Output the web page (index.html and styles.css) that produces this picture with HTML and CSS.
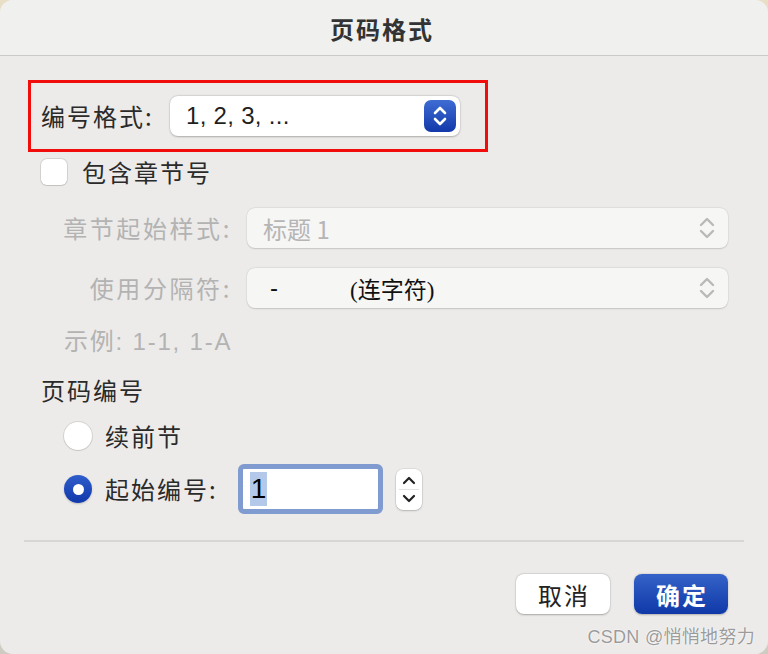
FILE: index.html
```html
<!DOCTYPE html>
<html lang="zh-CN">
<head>
<meta charset="utf-8">
<title>页码格式</title>
<link rel="stylesheet" href="styles.css">
</head>
<body>
<div class="dialog">
  <div class="titlebar">页码格式</div>
  <div class="content">
    <div class="highlight">
      <span class="label">编号格式:</span>
      <div class="select main-select">
        <span class="value latin">1, 2, 3, ...</span>
        <span class="stepper-blue">
          <svg width="32" height="32" viewBox="0 0 32 32"><path d="M11 13 L16 8 L21 13" fill="none" stroke="#fff" stroke-width="2.6" stroke-linecap="round" stroke-linejoin="round"/><path d="M11 19 L16 24 L21 19" fill="none" stroke="#fff" stroke-width="2.6" stroke-linecap="round" stroke-linejoin="round"/></svg>
        </span>
      </div>
    </div>

    <div class="check-row">
      <span class="checkbox"></span>
      <span class="label">包含章节号</span>
    </div>

    <div class="field-row first">
      <span class="label field-label disabled">章节起始样式:</span>
      <div class="select wide disabled-select">
        <span class="value disabled">标题 1</span>
        <svg class="chev" width="20" height="32" viewBox="0 0 20 32"><path d="M4 13 L10 7 L16 13" fill="none" stroke="#b9b9b9" stroke-width="2.4" stroke-linecap="round" stroke-linejoin="round"/><path d="M4 19 L10 25 L16 19" fill="none" stroke="#b9b9b9" stroke-width="2.4" stroke-linecap="round" stroke-linejoin="round"/></svg>
      </div>
    </div>

    <div class="field-row second">
      <span class="label field-label disabled">使用分隔符:</span>
      <div class="select wide disabled-select">
        <span class="value dash">-</span>
        <span class="value serif">(连字符)</span>
        <svg class="chev" width="20" height="32" viewBox="0 0 20 32"><path d="M4 13 L10 7 L16 13" fill="none" stroke="#b9b9b9" stroke-width="2.4" stroke-linecap="round" stroke-linejoin="round"/><path d="M4 19 L10 25 L16 19" fill="none" stroke="#b9b9b9" stroke-width="2.4" stroke-linecap="round" stroke-linejoin="round"/></svg>
      </div>
    </div>

    <div class="example disabled">示例:&nbsp;1-1, 1-A</div>

    <div class="section-title label">页码编号</div>

    <div class="radio-row r1">
      <span class="radio"></span>
      <span class="label">续前节</span>
    </div>

    <div class="radio-row r2">
      <span class="radio checked"><span class="dot"></span></span>
      <span class="label">起始编号:</span>
      <div class="numfield"><span class="sel">1</span></div>
      <div class="mini-stepper">
        <svg width="26" height="41" viewBox="0 0 26 41"><path d="M8 14 L13 9 L18 14" fill="none" stroke="#222" stroke-width="2.2" stroke-linecap="round" stroke-linejoin="round"/><line x1="3" y1="20.5" x2="23" y2="20.5" stroke="#e2e2e2" stroke-width="1"/><path d="M8 27 L13 32 L18 27" fill="none" stroke="#222" stroke-width="2.2" stroke-linecap="round" stroke-linejoin="round"/></svg>
      </div>
    </div>

    <div class="separator"></div>

    <div class="buttons">
      <button class="btn cancel">取消</button>
      <button class="btn ok">确定</button>
    </div>
    <div class="watermark">CSDN @悄悄地努力</div>
  </div>
</div>
</body>
</html>
```

FILE: styles.css
```css
html, body {
  margin: 0;
  padding: 0;
}
body {
  width: 768px;
  height: 654px;
  background: linear-gradient(#e9dfc6, #cfcbc3);
  font-family: "Liberation Sans", "Noto Sans CJK SC", sans-serif;
  color: #2a2a2a;
  overflow: hidden;
}
.dialog {
  width: 768px;
  height: 654px;
  border-radius: 13px;
  background: #ecebe9;
  overflow: hidden;
  display: flex;
  flex-direction: column;
}
.titlebar {
  flex: none;
  height: 56px;
  box-sizing: border-box;
  padding-top: 1px;
  padding-right: 4px;
  background: #f0f0ee;
  border-bottom: 1px solid #cbcac8;
  display: flex;
  align-items: center;
  justify-content: center;
  font-family: "Noto Sans CJK SC", sans-serif;
  font-weight: 700;
  font-size: 24px;
  letter-spacing: 2px;
  color: #333;
}
.content {
  position: relative;
  flex: 1;
  padding: 24px 0 0 0;
}
.label {
  font-family: "Noto Sans CJK SC", sans-serif;
  font-size: 24px;
  letter-spacing: 2px;
  color: #2a2a2a;
  line-height: 30px;
}
.disabled {
  color: #b3b3b3;
}
.highlight {
  margin-left: 28px;
  width: 460px;
  height: 72px;
  box-sizing: border-box;
  border: 3px solid #f20d0d;
  display: flex;
  align-items: center;
  padding-left: 10px;
}
.select {
  height: 40px;
  background: #fff;
  border-radius: 8px;
  box-shadow: 0 0.5px 2px rgba(0,0,0,0.25), 0 0 0 0.5px rgba(0,0,0,0.06);
  box-sizing: border-box;
  display: flex;
  align-items: center;
  position: relative;
}
.main-select {
  margin-left: auto;
  margin-right: 25px;
  width: 290px;
  padding-left: 16px;
}
.value {
  font-size: 24px;
  color: #1f1f1f;
}
.latin {
  font-family: "Liberation Sans", sans-serif;
  letter-spacing: 0.3px;
}
.stepper-blue {
  position: absolute;
  right: 4px;
  top: 4px;
  width: 32px;
  height: 32px;
  border-radius: 7px;
  background: linear-gradient(#3e6cd3, #1238a9);
  display: block;
}
.stepper-blue svg { display: block; }

.check-row {
  margin-top: 6px;
  margin-left: 41px;
  display: flex;
  align-items: center;
  height: 27px;
}
.checkbox {
  width: 26px;
  height: 26px;
  background: #fff;
  border-radius: 6px;
  box-shadow: 0 0 0 1px rgba(0,0,0,0.1), 0 1px 1px rgba(0,0,0,0.08);
  margin-right: 15px;
}

.field-row {
  display: flex;
  align-items: center;
  height: 40px;
}
.field-row.first { margin-top: 23px; }
.field-row.second { margin-top: 20px; }
.field-label {
  width: 247px;
  text-align: right;
  padding-right: 15px;
  box-sizing: border-box;
  letter-spacing: 2.6px;
}
.wide {
  width: 481px;
  padding-left: 16px;
}
.disabled-select {
  background: #f6f6f5;
  box-shadow: 0 0.5px 1.5px rgba(0,0,0,0.15), 0 0 0 0.5px rgba(0,0,0,0.05);
}
.disabled-select .value.disabled {
  color: #b5b5b5;
  font-family: "Noto Sans CJK SC", sans-serif;
}
.chev {
  position: absolute;
  right: 11px;
  top: 4px;
}
.dash {
  font-family: "Liberation Sans", sans-serif;
  color: #111;
  width: 80px;
  padding-left: 7px;
}
.serif {
  font-family: "Liberation Serif", "Noto Sans CJK SC", serif;
  color: #111;
  font-size: 23px;
}
.example {
  margin-top: 19px;
  margin-left: 64px;
  font-family: "Liberation Sans", "Noto Sans CJK SC", sans-serif;
  font-size: 24px;
  letter-spacing: 1.8px;
  line-height: 30px;
  color: #b3b3b3;
}
.section-title {
  margin-top: 18px;
  margin-left: 41px;
}
.radio-row {
  display: flex;
  align-items: center;
  margin-left: 64px;
}
.radio-row.r1 {
  margin-top: 17px;
  height: 28px;
}
.radio-row.r2 {
  margin-top: 14px;
  height: 50px;
}
.radio {
  width: 28px;
  height: 28px;
  border-radius: 50%;
  background: #fff;
  box-shadow: 0 0 0 1px rgba(0,0,0,0.1), 0 1px 1px rgba(0,0,0,0.08);
  margin-right: 13px;
  display: flex;
  align-items: center;
  justify-content: center;
  flex: none;
}
.radio.checked {
  background: linear-gradient(#2f5dcb, #1038ab);
  box-shadow: 0 1px 2px rgba(0,0,0,0.2);
}
.dot {
  width: 11px;
  height: 11px;
  border-radius: 50%;
  background: #fff;
}
.numfield {
  margin-left: 20px;
  width: 145px;
  height: 50px;
  box-sizing: border-box;
  border: 5px solid #7f9bd0;
  border-radius: 6px;
  background: #fff;
  display: flex;
  align-items: center;
  padding-left: 7px;
}
.sel {
  background: #b4c8ea;
  color: #000;
  font-family: "Liberation Sans", sans-serif;
  font-size: 28px;
  line-height: 34px;
  padding: 0 1px;
}
.mini-stepper {
  margin-left: 13px;
  width: 26px;
  height: 41px;
  background: #fff;
  border-radius: 7px;
  box-shadow: 0 0 0 0.5px rgba(0,0,0,0.12), 0 1px 2px rgba(0,0,0,0.18);
}
.mini-stepper svg { display: block; }
.separator {
  margin: 26px 24px 0 24px;
  height: 2px;
  background: #d7d6d4;
}
.buttons {
  display: flex;
  justify-content: flex-end;
  gap: 24px;
  margin-top: 32px;
  padding-right: 40px;
}
.btn {
  width: 94px;
  height: 40px;
  border: none;
  border-radius: 8px;
  font-family: "Noto Sans CJK SC", sans-serif;
  font-size: 24px;
  letter-spacing: 2px;
  padding: 0;
  padding-left: 2px;
}
.cancel {
  background: #fff;
  color: #222;
  box-shadow: 0 0.5px 2px rgba(0,0,0,0.28), 0 0 0 0.5px rgba(0,0,0,0.05);
}
.ok {
  background: linear-gradient(#3562c8, #0f39a8);
  color: #fff;
  font-weight: 700;
  box-shadow: 0 0.5px 2px rgba(0,0,0,0.25);
}
.watermark {
  position: absolute;
  right: 13px;
  bottom: 6px;
  font-family: "Liberation Sans", "Noto Sans CJK SC", sans-serif;
  font-size: 18px;
  letter-spacing: 0.3px;
  color: #9b9b9b;
  text-shadow: 0 0 1px #fff, 0 0 2px #fff;
}
```
